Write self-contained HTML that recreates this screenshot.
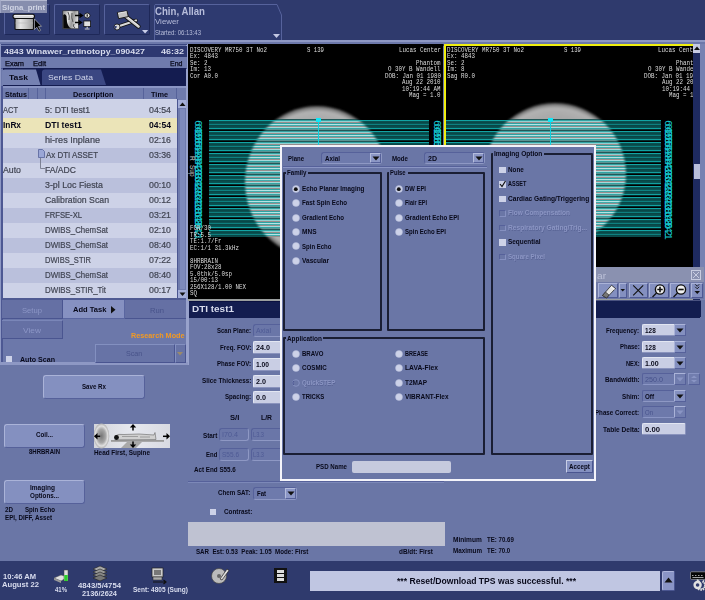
<!DOCTYPE html>
<html><head><meta charset="utf-8"><style>*{box-sizing:border-box;margin:0;padding:0}
html,body{width:705px;height:600px;overflow:hidden;background:#6a76a6;font-family:"Liberation Sans",sans-serif;position:relative}
.a{position:absolute}
.t{position:absolute;white-space:nowrap;line-height:1;transform-origin:0 0}
.b{font-weight:bold}
svg{position:absolute;overflow:visible}
</style></head><body>
<div class="a" style="left:0px;top:0px;width:705px;height:40px;background:#2f3a6d;"></div>
<div class="a" style="left:0px;top:40px;width:705px;height:1.5px;background:#8e98c4;"></div>
<div class="a" style="left:0px;top:41.5px;width:705px;height:2.5px;background:#6c78aa;"></div>
<div class="a" style="left:0px;top:44px;width:705px;height:1.5px;background:#27306a;"></div>
<div class="a" style="left:4px;top:4px;width:46px;height:31px;background:#2e3a70;border:1px solid #56629c;border-right-color:#1e2858;border-bottom-color:#1e2858;border-radius:2px;"></div>
<div class="a" style="left:54px;top:4px;width:46px;height:31px;background:#2e3a70;border:1px solid #56629c;border-right-color:#1e2858;border-bottom-color:#1e2858;border-radius:2px;"></div>
<div class="a" style="left:104px;top:4px;width:46px;height:31px;background:#2e3a70;border:1px solid #56629c;border-right-color:#1e2858;border-bottom-color:#1e2858;border-radius:2px;"></div>
<svg style="left:154px;top:3px" width="130" height="37"><path d="M0.5,37 V2.5 Q0.5,1.5 2,1.5 H123 L127.5,12 V37" fill="#2e3a70" stroke="#56629c" stroke-width="1"/></svg>
<div id="t0" class="t b" style="left:155px;top:6.21px;font-size:11px;color:#b6bcda;font-family:'Liberation Sans',sans-serif;transform:scaleX(0.8765);">Chin, Allan</div>
<div id="t1" class="t" style="left:155px;top:18.06px;font-size:8px;color:#b6bcda;font-family:'Liberation Sans',sans-serif;transform:scaleX(0.9871);">Viewer</div>
<div id="t2" class="t" style="left:155px;top:29.74px;font-size:6.5px;color:#b6bcda;font-family:'Liberation Sans',sans-serif;transform:scaleX(0.9223);">Started: 06:13:43</div>
<svg style="left:273px;top:34px" width="8" height="5"><path d="M0,0 H7 L3.5,4 Z" fill="#c3c8e4"/></svg>
<svg style="left:141.5px;top:30px" width="8" height="5"><path d="M0,0 H6.2 L3.1,3.6 Z" fill="#c8cde8"/></svg>
<svg style="left:12px;top:13px" width="32" height="20">
<defs><linearGradient id="i1" x1="0" x2="1"><stop offset="0" stop-color="#aaa"/><stop offset="0.3" stop-color="#e4e4e4"/><stop offset="0.6" stop-color="#c8c8c8"/><stop offset="1" stop-color="#999"/></linearGradient></defs>
<rect x="3" y="5" width="18.5" height="11.5" rx="1" fill="url(#i1)" stroke="#111" stroke-width="1.1"/>
<path d="M3.5,10 H21" stroke="#bbb" stroke-width="0.6"/>
<rect x="1" y="1.3" width="21.5" height="4.2" rx="2" fill="#d8d8d8" stroke="#111" stroke-width="1.1"/>
<path d="M2.5,2.6 H21" stroke="#fff" stroke-width="0.8"/>
<path d="M22.5,6 L22.5,16.5 L24.8,14.2 L27,18.2 L28.6,17.3 L26.5,13.5 L29.5,13.3 Z" fill="#000" stroke="#c8c8c8" stroke-width="0.6"/>
</svg>
<svg style="left:62px;top:10px" width="32" height="22">
<defs><linearGradient id="i2" x1="0" x2="1" y1="0" y2="0.3"><stop offset="0" stop-color="#888"/><stop offset="0.4" stop-color="#e8e8e8"/><stop offset="0.7" stop-color="#999"/><stop offset="1" stop-color="#ddd"/></linearGradient></defs>
<rect x="0.8" y="0.8" width="15.7" height="18" fill="url(#i2)" stroke="#222" stroke-width="0.6"/>
<path d="M1.2,5 Q3,3 4.5,6 L5,12 Q6,17 9,18.4 L1.2,18.4 Z" fill="#080808"/>
<path d="M6,2 Q8,6 7,10 M10,3 Q9,8 11,12 M12,14 Q10,16 13,18" stroke="#555" stroke-width="1" fill="none"/>
<path d="M13,5.5 H20 M17.5,3.5 L20.5,5.5 L17.5,7.5" stroke="#000" stroke-width="1.3" fill="none"/>
<path d="M13,12.5 H19 M16.5,10.5 L19.5,12.5 L16.5,14.5" stroke="#000" stroke-width="1.3" fill="none"/>
<ellipse cx="25.2" cy="5.5" rx="2.8" ry="2.5" fill="#ddd" stroke="#111" stroke-width="0.8"/>
<rect x="24.6" y="4.3" width="1.2" height="2.4" fill="#111"/>
<rect x="21.8" y="11" width="6.8" height="5.6" fill="#e0e0e0" stroke="#111" stroke-width="0.8"/>
<path d="M25.2,16.8 V18.3 M22.8,19 H27.6" stroke="#ccc" stroke-width="1.2"/>
</svg>
<svg style="left:111px;top:10px" width="32" height="22">
<path d="M7,16.5 L25,10.5" stroke="#111" stroke-width="3.6" stroke-linecap="round"/>
<path d="M7,16.5 L25,10.5" stroke="#d8d8d8" stroke-width="2.2" stroke-linecap="round"/>
<circle cx="6" cy="17" r="3" fill="#d8d8d8" stroke="#111" stroke-width="0.8"/>
<path d="M3,15.8 L6.2,16.6 L4.2,19.2 Z" fill="#2e3a70"/>
<path d="M13.5,5.5 L27.5,16.5" stroke="#111" stroke-width="4.4" stroke-linecap="round"/>
<path d="M13.5,5.5 L27.5,16.5" stroke="#cfcfcf" stroke-width="2.8" stroke-linecap="round"/>
<path d="M14,5 L27,15.5" stroke="#f0f0f0" stroke-width="0.8"/>
<path d="M6.3,2.6 L16,0.8 L17.3,6.6 L7.6,8.7 Z" fill="#c4c4c4" stroke="#111" stroke-width="0.9"/>
<path d="M7,3.2 L15.5,1.6" stroke="#eee" stroke-width="0.9"/>
</svg>
<div class="a" style="left:0px;top:0px;width:47px;height:13px;background:#878eae;border-top:1px solid #b4b9d0;border-left:1px solid #a0a6c4;"></div>
<div id="t3" class="t b" style="left:2px;top:4.08px;font-size:7.8px;color:#d0d4e4;font-family:'Liberation Sans',sans-serif;transform:scaleX(1.0026);">Signa_print</div>
<div class="a" style="left:0px;top:41.5px;width:188px;height:323.5px;background:#6c78aa;"></div>
<div class="a" style="left:0px;top:44px;width:1px;height:320px;background:#8e98c4;"></div>
<div class="a" style="left:1px;top:86px;width:2px;height:277px;background:#4d5893;"></div>
<div class="a" style="left:186px;top:44px;width:2.7px;height:321px;background:#98a2cc;"></div>
<div class="a" style="left:0px;top:362px;width:188px;height:3px;background:#8e98c4;"></div>
<div class="a" style="left:1px;top:44.3px;width:185.5px;height:1.2px;background:#3a4680;"></div>
<div class="a" style="left:1px;top:45.5px;width:185.5px;height:11px;background:#2d3871;"></div>
<div id="t4" class="t b" style="left:4px;top:47.58px;font-size:7.8px;color:#d8dcee;font-family:'Liberation Sans',sans-serif;transform:scaleX(1.1342);">4843 Winawer_retinotopy_090427</div>
<div id="t5" class="t b" style="left:161px;top:47.58px;font-size:7.8px;color:#d8dcee;font-family:'Liberation Sans',sans-serif;transform:scaleX(1.1527);">46:32</div>
<div class="a" style="left:1px;top:56.5px;width:185.5px;height:12px;background:#6f7bad;"></div>
<div class="a" style="left:1px;top:67.8px;width:185.5px;height:1px;background:#4a5590;"></div>
<div id="t6" class="t" style="left:5px;top:59.78px;font-size:7px;color:#08091a;font-family:'Liberation Sans',sans-serif;-webkit-text-stroke:0.25px #08091a;transform:scaleX(1.0611);">Exam</div>
<div id="t7" class="t" style="left:33px;top:59.78px;font-size:7px;color:#08091a;font-family:'Liberation Sans',sans-serif;-webkit-text-stroke:0.25px #08091a;transform:scaleX(1.0777);">Edit</div>
<div id="t8" class="t" style="left:170px;top:59.78px;font-size:7px;color:#08091a;font-family:'Liberation Sans',sans-serif;-webkit-text-stroke:0.25px #08091a;transform:scaleX(1.0025);">End</div>
<div class="a" style="left:3px;top:68px;width:183px;height:18px;background:#141c50;"></div>
<svg style="left:2px;top:69px" width="110" height="17"><path d="M0,16 V3 Q0,0.5 3,0.5 H34 L38.5,16 Z" fill="#7581b2"/><path d="M40,16 V3 Q40,0.5 43,0.5 H99 L104,16 Z" fill="#3b4782"/></svg>
<div id="t9" class="t b" style="left:9px;top:74.12px;font-size:7.5px;color:#08091a;font-family:'Liberation Sans',sans-serif;transform:scaleX(1.1483);">Task</div>
<div id="t10" class="t" style="left:48px;top:74.12px;font-size:7.5px;color:#d0d5ea;font-family:'Liberation Sans',sans-serif;transform:scaleX(1.1483);">Series Data</div>
<div class="a" style="left:3px;top:86px;width:183px;height:13px;background:#6f7bad;"></div>
<div class="a" style="left:3px;top:86px;width:183px;height:2px;background:#8a95c4;"></div>
<div class="a" style="left:28px;top:88px;width:1px;height:11px;background:#56629a;"></div>
<div class="a" style="left:36.5px;top:88px;width:1px;height:11px;background:#56629a;"></div>
<div class="a" style="left:44.5px;top:88px;width:1px;height:11px;background:#56629a;"></div>
<div class="a" style="left:143px;top:88px;width:1px;height:11px;background:#56629a;"></div>
<div class="a" style="left:176px;top:88px;width:1px;height:11px;background:#56629a;"></div>
<div id="t11" class="t b" style="left:5px;top:91.72px;font-size:6.6px;color:#08091a;font-family:'Liberation Sans',sans-serif;transform:scaleX(1.0915);">Status</div>
<div id="t12" class="t b" style="left:73px;top:91.72px;font-size:6.6px;color:#08091a;font-family:'Liberation Sans',sans-serif;transform:scaleX(1.1135);">Description</div>
<div id="t13" class="t b" style="left:151px;top:91.72px;font-size:6.6px;color:#08091a;font-family:'Liberation Sans',sans-serif;transform:scaleX(1.1125);">Time</div>
<div class="a" style="left:3px;top:99px;width:174px;height:199px;background:#cdd2e7;"></div>
<div class="a" style="left:3px;top:99px;width:174px;height:19px;background:#cdd2e7;"></div>
<div id="t14" class="t" style="left:3px;top:106.27px;font-size:8.8px;color:#404452;font-family:'Liberation Sans',sans-serif;-webkit-text-stroke:0.2px #404452;transform:scaleX(0.8518);">ACT</div>
<div id="t15" class="t" style="left:45px;top:106.27px;font-size:8.8px;color:#404452;font-family:'Liberation Sans',sans-serif;-webkit-text-stroke:0.2px #404452;transform:scaleX(0.9897);">5: DTI test1</div>
<div id="t16" class="t" style="left:149px;top:106.27px;font-size:8.8px;color:#404452;font-family:'Liberation Sans',sans-serif;-webkit-text-stroke:0.2px #404452;transform:scaleX(0.9993);">04:54</div>
<div class="a" style="left:3px;top:118px;width:174px;height:15px;background:#ebe4b8;"></div>
<div id="t17" class="t b" style="left:3px;top:121.37px;font-size:8.8px;color:#08091a;font-family:'Liberation Sans',sans-serif;transform:scaleX(0.9435);">InRx</div>
<div id="t18" class="t b" style="left:45px;top:121.37px;font-size:8.8px;color:#08091a;font-family:'Liberation Sans',sans-serif;transform:scaleX(0.9958);">DTI test1</div>
<div id="t19" class="t b" style="left:149px;top:121.37px;font-size:8.8px;color:#08091a;font-family:'Liberation Sans',sans-serif;transform:scaleX(0.9778);">04:54</div>
<div class="a" style="left:3px;top:133px;width:174px;height:15px;background:#cdd2e7;"></div>
<div id="t20" class="t" style="left:45px;top:136.37px;font-size:8.8px;color:#404452;font-family:'Liberation Sans',sans-serif;-webkit-text-stroke:0.2px #404452;transform:scaleX(1.0317);">hi-res Inplane</div>
<div id="t21" class="t" style="left:149px;top:136.37px;font-size:8.8px;color:#404452;font-family:'Liberation Sans',sans-serif;-webkit-text-stroke:0.2px #404452;transform:scaleX(0.9993);">02:16</div>
<div class="a" style="left:3px;top:148px;width:174px;height:15px;background:#bac0dc;"></div>
<div id="t22" class="t" style="left:46px;top:151.37px;font-size:8.8px;color:#404452;font-family:'Liberation Sans',sans-serif;-webkit-text-stroke:0.2px #404452;transform:scaleX(0.9014);">Ax DTI ASSET</div>
<div id="t23" class="t" style="left:149px;top:151.37px;font-size:8.8px;color:#404452;font-family:'Liberation Sans',sans-serif;-webkit-text-stroke:0.2px #404452;transform:scaleX(0.9993);">03:36</div>
<div class="a" style="left:3px;top:163px;width:174px;height:15px;background:#cdd2e7;"></div>
<div id="t24" class="t" style="left:3px;top:166.37px;font-size:8.8px;color:#404452;font-family:'Liberation Sans',sans-serif;-webkit-text-stroke:0.2px #404452;transform:scaleX(0.9940);">Auto</div>
<div id="t25" class="t" style="left:45px;top:166.37px;font-size:8.8px;color:#404452;font-family:'Liberation Sans',sans-serif;-webkit-text-stroke:0.2px #404452;transform:scaleX(0.9754);">FA/ADC</div>
<div class="a" style="left:3px;top:178px;width:174px;height:15px;background:#bac0dc;"></div>
<div id="t26" class="t" style="left:45px;top:181.37px;font-size:8.8px;color:#404452;font-family:'Liberation Sans',sans-serif;-webkit-text-stroke:0.2px #404452;transform:scaleX(1.0051);">3-pl Loc Fiesta</div>
<div id="t27" class="t" style="left:149px;top:181.37px;font-size:8.8px;color:#404452;font-family:'Liberation Sans',sans-serif;-webkit-text-stroke:0.2px #404452;transform:scaleX(0.9993);">00:10</div>
<div class="a" style="left:3px;top:193px;width:174px;height:15px;background:#cdd2e7;"></div>
<div id="t28" class="t" style="left:45px;top:196.37px;font-size:8.8px;color:#404452;font-family:'Liberation Sans',sans-serif;-webkit-text-stroke:0.2px #404452;transform:scaleX(0.9915);">Calibration Scan</div>
<div id="t29" class="t" style="left:149px;top:196.37px;font-size:8.8px;color:#404452;font-family:'Liberation Sans',sans-serif;-webkit-text-stroke:0.2px #404452;transform:scaleX(0.9993);">00:12</div>
<div class="a" style="left:3px;top:208px;width:174px;height:15px;background:#bac0dc;"></div>
<div id="t30" class="t" style="left:45px;top:211.37px;font-size:8.8px;color:#404452;font-family:'Liberation Sans',sans-serif;-webkit-text-stroke:0.2px #404452;transform:scaleX(0.8699);">FRFSE-XL</div>
<div id="t31" class="t" style="left:149px;top:211.37px;font-size:8.8px;color:#404452;font-family:'Liberation Sans',sans-serif;-webkit-text-stroke:0.2px #404452;transform:scaleX(0.9993);">03:21</div>
<div class="a" style="left:3px;top:223px;width:174px;height:15px;background:#cdd2e7;"></div>
<div id="t32" class="t" style="left:45px;top:226.37px;font-size:8.8px;color:#404452;font-family:'Liberation Sans',sans-serif;-webkit-text-stroke:0.2px #404452;transform:scaleX(0.8948);">DWIBS_ChemSat</div>
<div id="t33" class="t" style="left:149px;top:226.37px;font-size:8.8px;color:#404452;font-family:'Liberation Sans',sans-serif;-webkit-text-stroke:0.2px #404452;transform:scaleX(0.9993);">02:10</div>
<div class="a" style="left:3px;top:238px;width:174px;height:15px;background:#bac0dc;"></div>
<div id="t34" class="t" style="left:45px;top:241.37px;font-size:8.8px;color:#404452;font-family:'Liberation Sans',sans-serif;-webkit-text-stroke:0.2px #404452;transform:scaleX(0.8948);">DWIBS_ChemSat</div>
<div id="t35" class="t" style="left:149px;top:241.37px;font-size:8.8px;color:#404452;font-family:'Liberation Sans',sans-serif;-webkit-text-stroke:0.2px #404452;transform:scaleX(0.9993);">08:40</div>
<div class="a" style="left:3px;top:253px;width:174px;height:15px;background:#cdd2e7;"></div>
<div id="t36" class="t" style="left:45px;top:256.37px;font-size:8.8px;color:#404452;font-family:'Liberation Sans',sans-serif;-webkit-text-stroke:0.2px #404452;transform:scaleX(0.8556);">DWIBS_STIR</div>
<div id="t37" class="t" style="left:149px;top:256.37px;font-size:8.8px;color:#404452;font-family:'Liberation Sans',sans-serif;-webkit-text-stroke:0.2px #404452;transform:scaleX(0.9993);">07:22</div>
<div class="a" style="left:3px;top:268px;width:174px;height:15px;background:#bac0dc;"></div>
<div id="t38" class="t" style="left:45px;top:271.37px;font-size:8.8px;color:#404452;font-family:'Liberation Sans',sans-serif;-webkit-text-stroke:0.2px #404452;transform:scaleX(0.8948);">DWIBS_ChemSat</div>
<div id="t39" class="t" style="left:149px;top:271.37px;font-size:8.8px;color:#404452;font-family:'Liberation Sans',sans-serif;-webkit-text-stroke:0.2px #404452;transform:scaleX(0.9993);">08:40</div>
<div class="a" style="left:3px;top:283px;width:174px;height:15px;background:#cdd2e7;"></div>
<div id="t40" class="t" style="left:45px;top:286.37px;font-size:8.8px;color:#404452;font-family:'Liberation Sans',sans-serif;-webkit-text-stroke:0.2px #404452;transform:scaleX(0.8956);">DWIBS_STIR_Tit</div>
<div id="t41" class="t" style="left:149px;top:286.37px;font-size:8.8px;color:#404452;font-family:'Liberation Sans',sans-serif;-webkit-text-stroke:0.2px #404452;transform:scaleX(0.9993);">00:17</div>
<svg style="left:37px;top:148px" width="10" height="26"><path d="M1.5,1.5 H5.5 L7.5,3.5 V9.5 H1.5 Z" fill="#9aa6d6" stroke="#56629a" stroke-width="0.8"/><path d="M3.5,10 V20.5 H8" stroke="#6a6e80" stroke-width="0.8" fill="none"/></svg>
<div class="a" style="left:177px;top:99px;width:9px;height:199px;background:#6f7bad;"></div>
<div class="a" style="left:177px;top:99px;width:1px;height:199px;background:#4a5590;"></div>
<div class="a" style="left:178px;top:100px;width:8px;height:8px;background:#a4aed8;"></div>
<svg style="left:179px;top:102px" width="7" height="5"><path d="M0.5,4 H6.5 L3.5,0.5 Z" fill="#111"/></svg>
<div class="a" style="left:178px;top:290px;width:8px;height:8px;background:#a4aed8;"></div>
<svg style="left:179px;top:292px" width="7" height="5"><path d="M0.5,0.5 H6.5 L3.5,4 Z" fill="#111"/></svg>
<div class="a" style="left:180px;top:109px;width:5px;height:180px;background:#7e8abb;"></div>
<div class="a" style="left:3px;top:298px;width:183px;height:2px;background:#4f5a92;"></div>
<div class="a" style="left:2px;top:300px;width:61px;height:19px;background:#6570a4;border-bottom:1px solid #4a5590;border-right:1px solid #4a5590;"></div>
<div class="a" style="left:63px;top:300px;width:62px;height:19px;background:#8691c1;border-bottom:1px solid #5a66a0;border-right:1px solid #5a66a0;"></div>
<div class="a" style="left:125px;top:300px;width:61px;height:19px;background:#6570a4;border-bottom:1px solid #4a5590;"></div>
<div id="t42" class="t" style="left:22px;top:306.86px;font-size:8px;color:#8c96c6;font-family:'Liberation Sans',sans-serif;transform:scaleX(0.9567);">Setup</div>
<div id="t43" class="t b" style="left:72.5px;top:306.06px;font-size:8px;color:#08091a;font-family:'Liberation Sans',sans-serif;transform:scaleX(0.9457);">Add Task</div>
<svg style="left:111px;top:306px" width="5" height="8"><path d="M0,0 L4.5,3.8 L0,7.6 Z" fill="#111"/></svg>
<div id="t44" class="t" style="left:149.5px;top:306.86px;font-size:8px;color:#48538a;font-family:'Liberation Sans',sans-serif;transform:scaleX(0.9532);">Run</div>
<div class="a" style="left:2px;top:320px;width:61px;height:19px;background:#6570a4;border-bottom:1px solid #4a5590;border-right:1px solid #4a5590;border-top:1px solid #7a86b8;"></div>
<div id="t45" class="t" style="left:23px;top:326.66px;font-size:8px;color:#8c96c6;font-family:'Liberation Sans',sans-serif;transform:scaleX(1.0463);">View</div>
<div id="t46" class="t b" style="left:131px;top:331.92px;font-size:7.5px;color:#f29a22;font-family:'Liberation Sans',sans-serif;transform:scaleX(0.9651);">Research Mode</div>
<div class="a" style="left:95px;top:344px;width:80px;height:19px;background:#6773a6;border:1px solid #8390c0;border-right-color:#4a5590;border-bottom-color:#4a5590;"></div>
<div class="a" style="left:175px;top:344px;width:11px;height:19px;background:#6773a6;border:1px solid #8390c0;border-right-color:#4a5590;border-bottom-color:#4a5590;"></div>
<svg style="left:177px;top:352px" width="7" height="4"><path d="M0,0 H6 L3,3.5 Z" fill="#9a8a6a"/></svg>
<div id="t47" class="t" style="left:126.4px;top:350.06px;font-size:8px;color:#48538a;font-family:'Liberation Sans',sans-serif;transform:scaleX(0.8939);">Scan</div>
<div class="a" style="left:6px;top:356px;width:6px;height:6px;background:#cdd2e8;"></div>
<div id="t48" class="t b" style="left:20px;top:355.88px;font-size:7px;color:#08091a;font-family:'Liberation Sans',sans-serif;transform:scaleX(1.0108);">Auto Scan</div>
<div class="a" style="left:188px;top:44px;width:255px;height:255px;background:#000;overflow:hidden"><svg style="left:0;top:0" width="255" height="255"><defs><radialGradient id="g188" cx="0.5" cy="0.5" r="0.5"><stop offset="0" stop-color="#a2a2a2"/><stop offset="0.8" stop-color="#a8a8a8"/><stop offset="0.93" stop-color="#b2b2b2"/><stop offset="1" stop-color="#5a5a5a"/></radialGradient><pattern id="po188" patternUnits="userSpaceOnUse" x="0" y="75" width="4" height="11"><rect x="0" y="0" width="4" height="1" fill="#000"/><rect x="0" y="1" width="4" height="1" fill="#12a4a4"/><rect x="0" y="2" width="4" height="1" fill="#0a5050"/><rect x="0" y="3" width="4" height="1" fill="#084848"/><rect x="0" y="4" width="4" height="1" fill="#0a5252"/><rect x="0" y="5" width="4" height="1" fill="#0e8080"/><rect x="0" y="6" width="4" height="1" fill="#084646"/><rect x="0" y="7" width="4" height="1" fill="#0a4c4c"/><rect x="0" y="8" width="4" height="1" fill="#0a5252"/><rect x="0" y="9" width="4" height="1" fill="#12a2a2"/><rect x="0" y="10" width="4" height="1" fill="#042a2a"/></pattern><pattern id="pi188" patternUnits="userSpaceOnUse" x="0" y="75" width="4" height="11"><rect x="0" y="0" width="4" height="1" fill="#245858"/><rect x="0" y="1" width="4" height="1" fill="#32a4a4"/><rect x="0" y="2" width="4" height="1" fill="#94d0d0"/><rect x="0" y="3" width="4" height="1" fill="#988c8c"/><rect x="0" y="4" width="4" height="1" fill="#2ea2a2"/><rect x="0" y="5" width="4" height="1" fill="#b4e4e4"/><rect x="0" y="6" width="4" height="1" fill="#40acac"/><rect x="0" y="7" width="4" height="1" fill="#988c8c"/><rect x="0" y="8" width="4" height="1" fill="#a4dada"/><rect x="0" y="9" width="4" height="1" fill="#32a4a4"/><rect x="0" y="10" width="4" height="1" fill="#5e9494"/></pattern><filter id="bl188" x="-10%" y="-10%" width="120%" height="120%"><feGaussianBlur stdDeviation="1.3"/></filter><mask id="c188" maskUnits="userSpaceOnUse" x="0" y="0" width="255" height="255"><ellipse cx="129" cy="138" rx="72" ry="76" fill="#fff" filter="url(#bl188)"/></mask></defs><ellipse cx="129" cy="138" rx="72" ry="76" fill="url(#g188)" filter="url(#bl188)"/><rect x="21" y="75" width="220" height="118" fill="url(#po188)"/><rect x="21" y="75" width="220" height="118" fill="url(#pi188)" mask="url(#c188)"/><rect x="130" y="75" width="1" height="180" fill="#10d0e0"/><rect x="128" y="74" width="5" height="4" fill="#10e8f8"/><text x="0" y="0" font-family="Liberation Mono" font-size="10.5" fill="#14c4cc" transform="translate(7.2 76.00) rotate(90)">64</text><text x="0" y="0" font-family="Liberation Mono" font-size="10.5" fill="#14c4cc" transform="translate(7.2 79.55) rotate(90)">62</text><text x="0" y="0" font-family="Liberation Mono" font-size="10.5" fill="#14c4cc" transform="translate(7.2 83.10) rotate(90)">60</text><text x="0" y="0" font-family="Liberation Mono" font-size="10.5" fill="#14c4cc" transform="translate(7.2 86.65) rotate(90)">58</text><text x="0" y="0" font-family="Liberation Mono" font-size="10.5" fill="#14c4cc" transform="translate(7.2 90.20) rotate(90)">56</text><text x="0" y="0" font-family="Liberation Mono" font-size="10.5" fill="#14c4cc" transform="translate(7.2 93.75) rotate(90)">54</text><text x="0" y="0" font-family="Liberation Mono" font-size="10.5" fill="#14c4cc" transform="translate(7.2 97.30) rotate(90)">52</text><text x="0" y="0" font-family="Liberation Mono" font-size="10.5" fill="#14c4cc" transform="translate(7.2 100.85) rotate(90)">50</text><text x="0" y="0" font-family="Liberation Mono" font-size="10.5" fill="#14c4cc" transform="translate(7.2 104.40) rotate(90)">48</text><text x="0" y="0" font-family="Liberation Mono" font-size="10.5" fill="#14c4cc" transform="translate(7.2 107.95) rotate(90)">46</text><text x="0" y="0" font-family="Liberation Mono" font-size="10.5" fill="#14c4cc" transform="translate(7.2 111.50) rotate(90)">44</text><text x="0" y="0" font-family="Liberation Mono" font-size="10.5" fill="#14c4cc" transform="translate(7.2 115.05) rotate(90)">42</text><text x="0" y="0" font-family="Liberation Mono" font-size="10.5" fill="#14c4cc" transform="translate(7.2 118.60) rotate(90)">40</text><text x="0" y="0" font-family="Liberation Mono" font-size="10.5" fill="#14c4cc" transform="translate(7.2 122.15) rotate(90)">38</text><text x="0" y="0" font-family="Liberation Mono" font-size="10.5" fill="#14c4cc" transform="translate(7.2 125.70) rotate(90)">36</text><text x="0" y="0" font-family="Liberation Mono" font-size="10.5" fill="#14c4cc" transform="translate(7.2 129.25) rotate(90)">34</text><text x="0" y="0" font-family="Liberation Mono" font-size="10.5" fill="#14c4cc" transform="translate(7.2 132.80) rotate(90)">32</text><text x="0" y="0" font-family="Liberation Mono" font-size="10.5" fill="#14c4cc" transform="translate(7.2 136.35) rotate(90)">30</text><text x="0" y="0" font-family="Liberation Mono" font-size="10.5" fill="#14c4cc" transform="translate(7.2 139.90) rotate(90)">28</text><text x="0" y="0" font-family="Liberation Mono" font-size="10.5" fill="#14c4cc" transform="translate(7.2 143.45) rotate(90)">26</text><text x="0" y="0" font-family="Liberation Mono" font-size="10.5" fill="#14c4cc" transform="translate(7.2 147.00) rotate(90)">24</text><text x="0" y="0" font-family="Liberation Mono" font-size="10.5" fill="#14c4cc" transform="translate(7.2 150.55) rotate(90)">22</text><text x="0" y="0" font-family="Liberation Mono" font-size="10.5" fill="#14c4cc" transform="translate(7.2 154.10) rotate(90)">20</text><text x="0" y="0" font-family="Liberation Mono" font-size="10.5" fill="#14c4cc" transform="translate(7.2 157.65) rotate(90)">18</text><text x="0" y="0" font-family="Liberation Mono" font-size="10.5" fill="#14c4cc" transform="translate(7.2 161.20) rotate(90)">16</text><text x="0" y="0" font-family="Liberation Mono" font-size="10.5" fill="#14c4cc" transform="translate(7.2 164.75) rotate(90)">14</text><text x="0" y="0" font-family="Liberation Mono" font-size="10.5" fill="#14c4cc" transform="translate(7.2 168.30) rotate(90)">12</text><text x="0" y="0" font-family="Liberation Mono" font-size="10.5" fill="#14c4cc" transform="translate(7.2 171.85) rotate(90)">10</text><text x="0" y="0" font-family="Liberation Mono" font-size="10.5" fill="#14c4cc" transform="translate(7.2 175.40) rotate(90)">8</text><text x="0" y="0" font-family="Liberation Mono" font-size="10.5" fill="#14c4cc" transform="translate(7.2 178.95) rotate(90)">6</text><text x="0" y="0" font-family="Liberation Mono" font-size="10.5" fill="#14c4cc" transform="translate(7.2 182.50) rotate(90)">4</text><text x="0" y="0" font-family="Liberation Mono" font-size="10.5" fill="#14c4cc" transform="translate(7.2 186.05) rotate(90)">2</text><text x="0" y="0" font-family="Liberation Mono" font-size="10.5" fill="#14c4cc" transform="translate(7.2 189.60) rotate(90)">1</text><text x="0" y="0" font-family="Liberation Mono" font-size="10.5" fill="#14c4cc" transform="translate(246.2 76.00) rotate(90)">64</text><text x="0" y="0" font-family="Liberation Mono" font-size="10.5" fill="#14c4cc" transform="translate(246.2 79.55) rotate(90)">62</text><text x="0" y="0" font-family="Liberation Mono" font-size="10.5" fill="#14c4cc" transform="translate(246.2 83.10) rotate(90)">60</text><text x="0" y="0" font-family="Liberation Mono" font-size="10.5" fill="#14c4cc" transform="translate(246.2 86.65) rotate(90)">58</text><text x="0" y="0" font-family="Liberation Mono" font-size="10.5" fill="#14c4cc" transform="translate(246.2 90.20) rotate(90)">56</text><text x="0" y="0" font-family="Liberation Mono" font-size="10.5" fill="#14c4cc" transform="translate(246.2 93.75) rotate(90)">54</text><text x="0" y="0" font-family="Liberation Mono" font-size="10.5" fill="#14c4cc" transform="translate(246.2 97.30) rotate(90)">52</text><text x="0" y="0" font-family="Liberation Mono" font-size="10.5" fill="#14c4cc" transform="translate(246.2 100.85) rotate(90)">50</text><text x="0" y="0" font-family="Liberation Mono" font-size="10.5" fill="#14c4cc" transform="translate(246.2 104.40) rotate(90)">48</text><text x="0" y="0" font-family="Liberation Mono" font-size="10.5" fill="#14c4cc" transform="translate(246.2 107.95) rotate(90)">46</text><text x="0" y="0" font-family="Liberation Mono" font-size="10.5" fill="#14c4cc" transform="translate(246.2 111.50) rotate(90)">44</text><text x="0" y="0" font-family="Liberation Mono" font-size="10.5" fill="#14c4cc" transform="translate(246.2 115.05) rotate(90)">42</text><text x="0" y="0" font-family="Liberation Mono" font-size="10.5" fill="#14c4cc" transform="translate(246.2 118.60) rotate(90)">40</text><text x="0" y="0" font-family="Liberation Mono" font-size="10.5" fill="#14c4cc" transform="translate(246.2 122.15) rotate(90)">38</text><text x="0" y="0" font-family="Liberation Mono" font-size="10.5" fill="#14c4cc" transform="translate(246.2 125.70) rotate(90)">36</text><text x="0" y="0" font-family="Liberation Mono" font-size="10.5" fill="#14c4cc" transform="translate(246.2 129.25) rotate(90)">34</text><text x="0" y="0" font-family="Liberation Mono" font-size="10.5" fill="#14c4cc" transform="translate(246.2 132.80) rotate(90)">32</text><text x="0" y="0" font-family="Liberation Mono" font-size="10.5" fill="#14c4cc" transform="translate(246.2 136.35) rotate(90)">30</text><text x="0" y="0" font-family="Liberation Mono" font-size="10.5" fill="#14c4cc" transform="translate(246.2 139.90) rotate(90)">28</text><text x="0" y="0" font-family="Liberation Mono" font-size="10.5" fill="#14c4cc" transform="translate(246.2 143.45) rotate(90)">26</text><text x="0" y="0" font-family="Liberation Mono" font-size="10.5" fill="#14c4cc" transform="translate(246.2 147.00) rotate(90)">24</text><text x="0" y="0" font-family="Liberation Mono" font-size="10.5" fill="#14c4cc" transform="translate(246.2 150.55) rotate(90)">22</text><text x="0" y="0" font-family="Liberation Mono" font-size="10.5" fill="#14c4cc" transform="translate(246.2 154.10) rotate(90)">20</text><text x="0" y="0" font-family="Liberation Mono" font-size="10.5" fill="#14c4cc" transform="translate(246.2 157.65) rotate(90)">18</text><text x="0" y="0" font-family="Liberation Mono" font-size="10.5" fill="#14c4cc" transform="translate(246.2 161.20) rotate(90)">16</text><text x="0" y="0" font-family="Liberation Mono" font-size="10.5" fill="#14c4cc" transform="translate(246.2 164.75) rotate(90)">14</text><text x="0" y="0" font-family="Liberation Mono" font-size="10.5" fill="#14c4cc" transform="translate(246.2 168.30) rotate(90)">12</text><text x="0" y="0" font-family="Liberation Mono" font-size="10.5" fill="#14c4cc" transform="translate(246.2 171.85) rotate(90)">10</text><text x="0" y="0" font-family="Liberation Mono" font-size="10.5" fill="#14c4cc" transform="translate(246.2 175.40) rotate(90)">8</text><text x="0" y="0" font-family="Liberation Mono" font-size="10.5" fill="#14c4cc" transform="translate(246.2 178.95) rotate(90)">6</text><text x="0" y="0" font-family="Liberation Mono" font-size="10.5" fill="#14c4cc" transform="translate(246.2 182.50) rotate(90)">4</text><text x="0" y="0" font-family="Liberation Mono" font-size="10.5" fill="#14c4cc" transform="translate(246.2 186.05) rotate(90)">2</text><text x="0" y="0" font-family="Liberation Mono" font-size="10.5" fill="#14c4cc" transform="translate(246.2 189.60) rotate(90)">1</text></svg></div>
<div class="a" style="left:444px;top:44px;width:249px;height:255px;background:#000;overflow:hidden"><svg style="left:0;top:0" width="249" height="255"><defs><radialGradient id="g444" cx="0.5" cy="0.5" r="0.5"><stop offset="0" stop-color="#a2a2a2"/><stop offset="0.8" stop-color="#a8a8a8"/><stop offset="0.93" stop-color="#b2b2b2"/><stop offset="1" stop-color="#5a5a5a"/></radialGradient><pattern id="po444" patternUnits="userSpaceOnUse" x="0" y="75" width="4" height="11"><rect x="0" y="0" width="4" height="1" fill="#000"/><rect x="0" y="1" width="4" height="1" fill="#12a4a4"/><rect x="0" y="2" width="4" height="1" fill="#0a5050"/><rect x="0" y="3" width="4" height="1" fill="#084848"/><rect x="0" y="4" width="4" height="1" fill="#0a5252"/><rect x="0" y="5" width="4" height="1" fill="#0e8080"/><rect x="0" y="6" width="4" height="1" fill="#084646"/><rect x="0" y="7" width="4" height="1" fill="#0a4c4c"/><rect x="0" y="8" width="4" height="1" fill="#0a5252"/><rect x="0" y="9" width="4" height="1" fill="#12a2a2"/><rect x="0" y="10" width="4" height="1" fill="#042a2a"/></pattern><pattern id="pi444" patternUnits="userSpaceOnUse" x="0" y="75" width="4" height="11"><rect x="0" y="0" width="4" height="1" fill="#245858"/><rect x="0" y="1" width="4" height="1" fill="#32a4a4"/><rect x="0" y="2" width="4" height="1" fill="#94d0d0"/><rect x="0" y="3" width="4" height="1" fill="#988c8c"/><rect x="0" y="4" width="4" height="1" fill="#2ea2a2"/><rect x="0" y="5" width="4" height="1" fill="#b4e4e4"/><rect x="0" y="6" width="4" height="1" fill="#40acac"/><rect x="0" y="7" width="4" height="1" fill="#988c8c"/><rect x="0" y="8" width="4" height="1" fill="#a4dada"/><rect x="0" y="9" width="4" height="1" fill="#32a4a4"/><rect x="0" y="10" width="4" height="1" fill="#5e9494"/></pattern><filter id="bl444" x="-10%" y="-10%" width="120%" height="120%"><feGaussianBlur stdDeviation="1.3"/></filter><mask id="c444" maskUnits="userSpaceOnUse" x="0" y="0" width="249" height="255"><ellipse cx="111" cy="130" rx="71" ry="71" fill="#fff" filter="url(#bl444)"/></mask></defs><ellipse cx="111" cy="130" rx="71" ry="71" fill="url(#g444)" filter="url(#bl444)"/><rect x="1.6000000000000227" y="75" width="215.39999999999998" height="118" fill="url(#po444)"/><rect x="1.6000000000000227" y="75" width="215.39999999999998" height="118" fill="url(#pi444)" mask="url(#c444)"/><rect x="106" y="75" width="1" height="180" fill="#10d0e0"/><rect x="104" y="74" width="5" height="4" fill="#10e8f8"/><text x="0" y="0" font-family="Liberation Mono" font-size="10.5" fill="#14c4cc" transform="translate(221.2 76.00) rotate(90)">64</text><text x="0" y="0" font-family="Liberation Mono" font-size="10.5" fill="#14c4cc" transform="translate(221.2 79.55) rotate(90)">62</text><text x="0" y="0" font-family="Liberation Mono" font-size="10.5" fill="#14c4cc" transform="translate(221.2 83.10) rotate(90)">60</text><text x="0" y="0" font-family="Liberation Mono" font-size="10.5" fill="#14c4cc" transform="translate(221.2 86.65) rotate(90)">58</text><text x="0" y="0" font-family="Liberation Mono" font-size="10.5" fill="#14c4cc" transform="translate(221.2 90.20) rotate(90)">56</text><text x="0" y="0" font-family="Liberation Mono" font-size="10.5" fill="#14c4cc" transform="translate(221.2 93.75) rotate(90)">54</text><text x="0" y="0" font-family="Liberation Mono" font-size="10.5" fill="#14c4cc" transform="translate(221.2 97.30) rotate(90)">52</text><text x="0" y="0" font-family="Liberation Mono" font-size="10.5" fill="#14c4cc" transform="translate(221.2 100.85) rotate(90)">50</text><text x="0" y="0" font-family="Liberation Mono" font-size="10.5" fill="#14c4cc" transform="translate(221.2 104.40) rotate(90)">48</text><text x="0" y="0" font-family="Liberation Mono" font-size="10.5" fill="#14c4cc" transform="translate(221.2 107.95) rotate(90)">46</text><text x="0" y="0" font-family="Liberation Mono" font-size="10.5" fill="#14c4cc" transform="translate(221.2 111.50) rotate(90)">44</text><text x="0" y="0" font-family="Liberation Mono" font-size="10.5" fill="#14c4cc" transform="translate(221.2 115.05) rotate(90)">42</text><text x="0" y="0" font-family="Liberation Mono" font-size="10.5" fill="#14c4cc" transform="translate(221.2 118.60) rotate(90)">40</text><text x="0" y="0" font-family="Liberation Mono" font-size="10.5" fill="#14c4cc" transform="translate(221.2 122.15) rotate(90)">38</text><text x="0" y="0" font-family="Liberation Mono" font-size="10.5" fill="#14c4cc" transform="translate(221.2 125.70) rotate(90)">36</text><text x="0" y="0" font-family="Liberation Mono" font-size="10.5" fill="#14c4cc" transform="translate(221.2 129.25) rotate(90)">34</text><text x="0" y="0" font-family="Liberation Mono" font-size="10.5" fill="#14c4cc" transform="translate(221.2 132.80) rotate(90)">32</text><text x="0" y="0" font-family="Liberation Mono" font-size="10.5" fill="#14c4cc" transform="translate(221.2 136.35) rotate(90)">30</text><text x="0" y="0" font-family="Liberation Mono" font-size="10.5" fill="#14c4cc" transform="translate(221.2 139.90) rotate(90)">28</text><text x="0" y="0" font-family="Liberation Mono" font-size="10.5" fill="#14c4cc" transform="translate(221.2 143.45) rotate(90)">26</text><text x="0" y="0" font-family="Liberation Mono" font-size="10.5" fill="#14c4cc" transform="translate(221.2 147.00) rotate(90)">24</text><text x="0" y="0" font-family="Liberation Mono" font-size="10.5" fill="#14c4cc" transform="translate(221.2 150.55) rotate(90)">22</text><text x="0" y="0" font-family="Liberation Mono" font-size="10.5" fill="#14c4cc" transform="translate(221.2 154.10) rotate(90)">20</text><text x="0" y="0" font-family="Liberation Mono" font-size="10.5" fill="#14c4cc" transform="translate(221.2 157.65) rotate(90)">18</text><text x="0" y="0" font-family="Liberation Mono" font-size="10.5" fill="#14c4cc" transform="translate(221.2 161.20) rotate(90)">16</text><text x="0" y="0" font-family="Liberation Mono" font-size="10.5" fill="#14c4cc" transform="translate(221.2 164.75) rotate(90)">14</text><text x="0" y="0" font-family="Liberation Mono" font-size="10.5" fill="#14c4cc" transform="translate(221.2 168.30) rotate(90)">12</text><text x="0" y="0" font-family="Liberation Mono" font-size="10.5" fill="#14c4cc" transform="translate(221.2 171.85) rotate(90)">10</text><text x="0" y="0" font-family="Liberation Mono" font-size="10.5" fill="#14c4cc" transform="translate(221.2 175.40) rotate(90)">8</text><text x="0" y="0" font-family="Liberation Mono" font-size="10.5" fill="#14c4cc" transform="translate(221.2 178.95) rotate(90)">6</text><text x="0" y="0" font-family="Liberation Mono" font-size="10.5" fill="#14c4cc" transform="translate(221.2 182.50) rotate(90)">4</text><text x="0" y="0" font-family="Liberation Mono" font-size="10.5" fill="#14c4cc" transform="translate(221.2 186.05) rotate(90)">2</text><text x="0" y="0" font-family="Liberation Mono" font-size="10.5" fill="#14c4cc" transform="translate(221.2 189.60) rotate(90)">1</text></svg></div>
<div class="a" style="left:444px;top:44px;width:249px;height:2px;background:#f0ee10;"></div>
<div class="a" style="left:444px;top:44px;width:1.6px;height:255px;background:#f0ee10;"></div>
<div id="t49" class="t" style="left:190px;top:46.79px;font-size:7px;color:#dcdcdc;font-family:'Liberation Mono',monospace;transform:scaleX(0.8331);">DISCOVERY MR750 3T No2</div>
<div id="t50" class="t" style="left:190px;top:53.34px;font-size:7px;color:#dcdcdc;font-family:'Liberation Mono',monospace;transform:scaleX(0.8331);">Ex: 4843</div>
<div id="t51" class="t" style="left:190px;top:59.89px;font-size:7px;color:#dcdcdc;font-family:'Liberation Mono',monospace;transform:scaleX(0.8327);">Se: 2</div>
<div id="t52" class="t" style="left:190px;top:66.44px;font-size:7px;color:#dcdcdc;font-family:'Liberation Mono',monospace;transform:scaleX(0.8327);">Im: 13</div>
<div id="t53" class="t" style="left:190px;top:72.99px;font-size:7px;color:#dcdcdc;font-family:'Liberation Mono',monospace;transform:scaleX(0.8331);">Cor A0.0</div>
<div id="t54" class="t" style="left:307px;top:46.79px;font-size:7px;color:#dcdcdc;font-family:'Liberation Mono',monospace;transform:scaleX(0.8089);">S 139</div>
<div id="t55" class="t" style="top:46.79px;font-size:7px;color:#dcdcdc;font-family:'Liberation Mono',monospace;transform:scaleX(0.8330);left:398.50px;">Lucas Center</div>
<div id="t56" class="t" style="top:59.79px;font-size:7px;color:#dcdcdc;font-family:'Liberation Mono',monospace;transform:scaleX(0.8332);left:416.00px;">Phantom</div>
<div id="t57" class="t" style="top:66.29px;font-size:7px;color:#dcdcdc;font-family:'Liberation Mono',monospace;transform:scaleX(0.8331);left:388.00px;">O 30Y B Wandell</div>
<div id="t58" class="t" style="top:72.79px;font-size:7px;color:#dcdcdc;font-family:'Liberation Mono',monospace;transform:scaleX(0.8331);left:384.50px;">DOB: Jan 01 1980</div>
<div id="t59" class="t" style="top:79.29px;font-size:7px;color:#dcdcdc;font-family:'Liberation Mono',monospace;transform:scaleX(0.8330);left:402.00px;">Aug 22 2010</div>
<div id="t60" class="t" style="top:85.79px;font-size:7px;color:#dcdcdc;font-family:'Liberation Mono',monospace;transform:scaleX(0.8330);left:402.00px;">10:19:44 AM</div>
<div id="t61" class="t" style="top:92.29px;font-size:7px;color:#dcdcdc;font-family:'Liberation Mono',monospace;transform:scaleX(0.8331);left:409.00px;">Mag = 1.0</div>
<div id="t62" class="t" style="left:190px;top:225.49px;font-size:7px;color:#dcdcdc;font-family:'Liberation Mono',monospace;transform:scaleX(0.8327);">FGN/30</div>
<div id="t63" class="t" style="left:190px;top:231.99px;font-size:7px;color:#dcdcdc;font-family:'Liberation Mono',monospace;transform:scaleX(0.8327);">TR:5.5</div>
<div id="t64" class="t" style="left:190px;top:238.49px;font-size:7px;color:#dcdcdc;font-family:'Liberation Mono',monospace;transform:scaleX(0.8331);">TE:1.7/Fr</div>
<div id="t65" class="t" style="left:190px;top:244.99px;font-size:7px;color:#dcdcdc;font-family:'Liberation Mono',monospace;transform:scaleX(0.8332);">EC:1/1 31.3kHz</div>
<div id="t66" class="t" style="left:190px;top:257.99px;font-size:7px;color:#dcdcdc;font-family:'Liberation Mono',monospace;transform:scaleX(0.8331);">8HRBRAIN</div>
<div id="t67" class="t" style="left:190px;top:264.49px;font-size:7px;color:#dcdcdc;font-family:'Liberation Mono',monospace;transform:scaleX(0.8331);">FOV:28x28</div>
<div id="t68" class="t" style="left:190px;top:270.99px;font-size:7px;color:#dcdcdc;font-family:'Liberation Mono',monospace;transform:scaleX(0.8330);">5.0thk/5.0sp</div>
<div id="t69" class="t" style="left:190px;top:277.49px;font-size:7px;color:#dcdcdc;font-family:'Liberation Mono',monospace;transform:scaleX(0.8331);">15/00:13</div>
<div id="t70" class="t" style="left:190px;top:283.99px;font-size:7px;color:#dcdcdc;font-family:'Liberation Mono',monospace;transform:scaleX(0.8331);">256X128/1.00 NEX</div>
<div id="t71" class="t" style="left:190px;top:290.49px;font-size:7px;color:#dcdcdc;font-family:'Liberation Mono',monospace;transform:scaleX(0.8327);">SQ</div>
<svg style="left:188px;top:150px" width="10" height="40"><text x="0" y="0" font-family="Liberation Sans" font-size="6.5" fill="#c8c8c8" transform="translate(2 6) rotate(90)">R</text><text x="0" y="0" font-family="Liberation Sans" font-size="6.5" fill="#c8c8c8" transform="translate(2 15) rotate(90)">Sup</text></svg>
<div id="t72" class="t" style="left:447px;top:46.79px;font-size:7px;color:#dcdcdc;font-family:'Liberation Mono',monospace;transform:scaleX(0.8331);">DISCOVERY MR750 3T No2</div>
<div id="t73" class="t" style="left:447px;top:53.34px;font-size:7px;color:#dcdcdc;font-family:'Liberation Mono',monospace;transform:scaleX(0.8331);">Ex: 4843</div>
<div id="t74" class="t" style="left:447px;top:59.89px;font-size:7px;color:#dcdcdc;font-family:'Liberation Mono',monospace;transform:scaleX(0.8327);">Se: 2</div>
<div id="t75" class="t" style="left:447px;top:66.44px;font-size:7px;color:#dcdcdc;font-family:'Liberation Mono',monospace;transform:scaleX(0.8327);">Im: 8</div>
<div id="t76" class="t" style="left:447px;top:72.99px;font-size:7px;color:#dcdcdc;font-family:'Liberation Mono',monospace;transform:scaleX(0.8331);">Sag R0.0</div>
<div id="t77" class="t" style="left:563.5px;top:46.79px;font-size:7px;color:#dcdcdc;font-family:'Liberation Mono',monospace;transform:scaleX(0.8089);">S 139</div>
<div class="a" style="left:444px;top:44px;width:249px;height:100px;overflow:hidden">
<div id="t78" class="t" style="top:2.79px;font-size:7px;color:#dcdcdc;font-family:'Liberation Mono',monospace;transform:scaleX(0.8330);left:214.00px;">Lucas Center</div>
<div id="t79" class="t" style="top:15.79px;font-size:7px;color:#dcdcdc;font-family:'Liberation Mono',monospace;transform:scaleX(0.8332);left:231.50px;">Phantom</div>
<div id="t80" class="t" style="top:22.29px;font-size:7px;color:#dcdcdc;font-family:'Liberation Mono',monospace;transform:scaleX(0.8331);left:203.50px;">O 30Y B Wandell</div>
<div id="t81" class="t" style="top:28.79px;font-size:7px;color:#dcdcdc;font-family:'Liberation Mono',monospace;transform:scaleX(0.8331);left:200.00px;">DOB: Jan 01 1980</div>
<div id="t82" class="t" style="top:35.29px;font-size:7px;color:#dcdcdc;font-family:'Liberation Mono',monospace;transform:scaleX(0.8330);left:217.50px;">Aug 22 2010</div>
<div id="t83" class="t" style="top:41.79px;font-size:7px;color:#dcdcdc;font-family:'Liberation Mono',monospace;transform:scaleX(0.8330);left:217.50px;">10:19:44 AM</div>
<div id="t84" class="t" style="top:48.29px;font-size:7px;color:#dcdcdc;font-family:'Liberation Mono',monospace;transform:scaleX(0.8331);left:224.50px;">Mag = 1.0</div>
</div>
<div class="a" style="left:693px;top:44px;width:7px;height:256px;background:#1e2a60;"></div>
<div class="a" style="left:693px;top:44px;width:7px;height:9px;background:#c5cae2;"></div>
<svg style="left:694px;top:46px" width="6" height="5"><path d="M0,4 H6 L3,0.5 Z" fill="#111"/></svg>
<div class="a" style="left:694px;top:164px;width:6px;height:15px;background:#b8bedb;"></div>
<div class="a" style="left:700px;top:44px;width:5px;height:256px;background:#7782b2;"></div>
<div class="a" style="left:188px;top:299px;width:505px;height:1.5px;background:#9a9e9e;"></div>
<div class="a" style="left:189px;top:300.5px;width:511px;height:1px;background:#0a1040;"></div>
<div class="a" style="left:189px;top:301.5px;width:511px;height:16px;background:#131d50;"></div>
<div id="t85" class="t b" style="left:192.4px;top:304.94px;font-size:9px;color:#d8dcee;font-family:'Liberation Sans',sans-serif;transform:scaleX(1.1048);">DTI test1</div>
<div id="t86" class="t b" style="top:327.18px;font-size:7px;color:#08091a;font-family:'Liberation Sans',sans-serif;transform:scaleX(0.8567);left:217.00px;">Scan Plane:</div>
<div class="a" style="left:253px;top:324px;width:30px;height:12.5px;background:#6a76a8;border:1px solid #56619a;border-right-color:#8e98c4;border-bottom-color:#8e98c4;border-radius:3px;"></div>
<div id="t87" class="t" style="left:256px;top:327.48px;font-size:7px;color:#4e5a94;font-family:'Liberation Sans',sans-serif;transform:scaleX(0.9877);">Axial</div>
<div id="t88" class="t b" style="top:343.58px;font-size:7px;color:#08091a;font-family:'Liberation Sans',sans-serif;transform:scaleX(0.8868);left:219.60px;">Freq. FOV:</div>
<div class="a" style="left:253px;top:341px;width:30px;height:12.5px;background:#c9cee4;border:1px solid #e2e6f2;border-right-color:#8a93bd;border-bottom-color:#8a93bd;border-radius:2px;"></div>
<div id="t89" class="t b" style="left:256px;top:344.48px;font-size:7px;color:#08091a;font-family:'Liberation Sans',sans-serif;transform:scaleX(1.0275);">24.0</div>
<div id="t90" class="t b" style="top:360.18px;font-size:7px;color:#08091a;font-family:'Liberation Sans',sans-serif;transform:scaleX(0.8739);left:217.00px;">Phase FOV:</div>
<div class="a" style="left:253px;top:358px;width:30px;height:12.5px;background:#c9cee4;border:1px solid #e2e6f2;border-right-color:#8a93bd;border-bottom-color:#8a93bd;border-radius:2px;"></div>
<div id="t91" class="t b" style="left:256px;top:361.48px;font-size:7px;color:#08091a;font-family:'Liberation Sans',sans-serif;transform:scaleX(0.9541);">1.00</div>
<div id="t92" class="t b" style="top:376.68px;font-size:7px;color:#08091a;font-family:'Liberation Sans',sans-serif;transform:scaleX(0.9005);left:201.60px;">Slice Thickness:</div>
<div class="a" style="left:253px;top:375px;width:30px;height:12.5px;background:#c9cee4;border:1px solid #e2e6f2;border-right-color:#8a93bd;border-bottom-color:#8a93bd;border-radius:2px;"></div>
<div id="t93" class="t b" style="left:256px;top:378.48px;font-size:7px;color:#08091a;font-family:'Liberation Sans',sans-serif;transform:scaleX(1.0273);">2.0</div>
<div id="t94" class="t b" style="top:393.18px;font-size:7px;color:#08091a;font-family:'Liberation Sans',sans-serif;transform:scaleX(0.8795);left:225.00px;">Spacing:</div>
<div class="a" style="left:253px;top:391px;width:30px;height:12.5px;background:#c9cee4;border:1px solid #e2e6f2;border-right-color:#8a93bd;border-bottom-color:#8a93bd;border-radius:2px;"></div>
<div id="t95" class="t b" style="left:256px;top:394.48px;font-size:7px;color:#08091a;font-family:'Liberation Sans',sans-serif;transform:scaleX(1.0273);">0.0</div>
<div id="t96" class="t b" style="left:229.6px;top:415.24px;font-size:6.5px;color:#08091a;font-family:'Liberation Sans',sans-serif;transform:scaleX(1.1819);">S/I</div>
<div id="t97" class="t b" style="left:261px;top:415.24px;font-size:6.5px;color:#08091a;font-family:'Liberation Sans',sans-serif;transform:scaleX(1.0492);">L/R</div>
<div id="t98" class="t b" style="top:431.58px;font-size:7px;color:#08091a;font-family:'Liberation Sans',sans-serif;transform:scaleX(0.9026);left:202.60px;">Start</div>
<div class="a" style="left:219px;top:428px;width:30px;height:13px;background:#6a76a8;border:1px solid #56619a;border-right-color:#8e98c4;border-bottom-color:#8e98c4;border-radius:3px;"></div>
<div id="t99" class="t" style="left:222px;top:431.48px;font-size:7px;color:#4e5a94;font-family:'Liberation Sans',sans-serif;transform:scaleX(1.0271);">I70.4</div>
<div class="a" style="left:251px;top:428px;width:32px;height:13px;background:#6a76a8;border:1px solid #56619a;border-right-color:#8e98c4;border-bottom-color:#8e98c4;border-radius:3px;"></div>
<div id="t100" class="t" style="left:253px;top:431.48px;font-size:7px;color:#4e5a94;font-family:'Liberation Sans',sans-serif;transform:scaleX(0.8073);">L3.3</div>
<div id="t101" class="t b" style="top:451.18px;font-size:7px;color:#08091a;font-family:'Liberation Sans',sans-serif;transform:scaleX(0.8538);left:205.70px;">End</div>
<div class="a" style="left:219px;top:447.5px;width:30px;height:13px;background:#6a76a8;border:1px solid #56619a;border-right-color:#8e98c4;border-bottom-color:#8e98c4;border-radius:3px;"></div>
<div id="t102" class="t" style="left:222px;top:450.98px;font-size:7px;color:#4e5a94;font-family:'Liberation Sans',sans-serif;transform:scaleX(0.9291);">S55.6</div>
<div class="a" style="left:251px;top:447.5px;width:32px;height:13px;background:#6a76a8;border:1px solid #56619a;border-right-color:#8e98c4;border-bottom-color:#8e98c4;border-radius:3px;"></div>
<div id="t103" class="t" style="left:253px;top:450.98px;font-size:7px;color:#4e5a94;font-family:'Liberation Sans',sans-serif;transform:scaleX(0.8073);">L3.3</div>
<div id="t104" class="t b" style="left:194px;top:465.68px;font-size:7px;color:#08091a;font-family:'Liberation Sans',sans-serif;transform:scaleX(0.8953);">Act End S55.6</div>
<div class="a" style="left:188px;top:481px;width:256px;height:1px;background:#56619a;"></div>
<div class="a" style="left:188px;top:482px;width:256px;height:1px;background:#7c88b8;"></div>
<div id="t105" class="t b" style="top:489.48px;font-size:7px;color:#08091a;font-family:'Liberation Sans',sans-serif;transform:scaleX(0.8864);left:217.90px;">Chem SAT:</div>
<div class="a" style="left:253px;top:487px;width:44px;height:12.5px;background:#6e7aac;border:1px solid #56619a;border-right-color:#8e98c4;border-bottom-color:#8e98c4;border-radius:3px;"></div>
<div class="a" style="left:285px;top:488px;width:11px;height:10.5px;background:#8c97c6;border:1px solid #b4bcdc;border-right-color:#56619a;border-bottom-color:#56619a;"></div>
<svg style="left:287px;top:491.25px" width="8" height="5"><path d="M0.5,0.5 H7.5 L4,4.5 Z" fill="#111"/></svg>
<div id="t106" class="t b" style="left:256.6px;top:489.58px;font-size:7px;color:#08091a;font-family:'Liberation Sans',sans-serif;transform:scaleX(0.8571);">Fat</div>
<div class="a" style="left:210px;top:509px;width:6px;height:6px;background:#cdd2e8;"></div>
<div id="t107" class="t b" style="left:223.6px;top:508.70px;font-size:6.8px;color:#08091a;font-family:'Liberation Sans',sans-serif;transform:scaleX(0.9365);">Contrast:</div>
<div class="a" style="left:188px;top:522px;width:257px;height:24px;background:#bfc2d2;"></div>
<div id="t108" class="t b" style="left:196px;top:548.74px;font-size:6.5px;color:#08091a;font-family:'Liberation Sans',sans-serif;transform:scaleX(0.9507);">SAR&nbsp; Est: 0.53&nbsp; Peak: 1.05&nbsp; Mode: First</div>
<div id="t109" class="t b" style="left:399px;top:548.74px;font-size:6.5px;color:#08091a;font-family:'Liberation Sans',sans-serif;transform:scaleX(0.9806);">dB/dt: First</div>
<div id="t110" class="t b" style="left:453px;top:536.66px;font-size:6.3px;color:#08091a;font-family:'Liberation Sans',sans-serif;transform:scaleX(1.0419);">Minimum</div>
<div id="t111" class="t b" style="left:487.4px;top:536.66px;font-size:6.3px;color:#08091a;font-family:'Liberation Sans',sans-serif;transform:scaleX(0.9690);">TE: 70.69</div>
<div id="t112" class="t b" style="left:453px;top:548.06px;font-size:6.3px;color:#08091a;font-family:'Liberation Sans',sans-serif;transform:scaleX(0.9984);">Maximum</div>
<div id="t113" class="t b" style="left:487.4px;top:548.06px;font-size:6.3px;color:#08091a;font-family:'Liberation Sans',sans-serif;transform:scaleX(0.9604);">TE: 70.0</div>
<div class="a" style="left:42.5px;top:375px;width:102px;height:24px;background:#8490c0;border:1px solid #aab3d8;border-right-color:#56619a;border-bottom-color:#56619a;border-radius:3px;"></div>
<div id="t114" class="t b" style="left:82px;top:383.96px;font-size:6.3px;color:#08091a;font-family:'Liberation Sans',sans-serif;transform:scaleX(0.9790);">Save Rx</div>
<div class="a" style="left:4px;top:424px;width:81px;height:24px;background:#8490c0;border:1px solid #aab3d8;border-right-color:#56619a;border-bottom-color:#56619a;border-radius:3px;"></div>
<div id="t115" class="t b" style="left:36px;top:432.26px;font-size:6.3px;color:#08091a;font-family:'Liberation Sans',sans-serif;transform:scaleX(0.9909);">Coil...</div>
<div id="t116" class="t b" style="left:29px;top:448.76px;font-size:6.3px;color:#08091a;font-family:'Liberation Sans',sans-serif;transform:scaleX(0.9525);">8HRBRAIN</div>
<div class="a" style="left:4px;top:479.5px;width:81px;height:24px;background:#8490c0;border:1px solid #aab3d8;border-right-color:#56619a;border-bottom-color:#56619a;border-radius:3px;"></div>
<div id="t117" class="t b" style="left:30px;top:485.26px;font-size:6.3px;color:#08091a;font-family:'Liberation Sans',sans-serif;transform:scaleX(1.0356);">Imaging</div>
<div id="t118" class="t b" style="left:30px;top:492.56px;font-size:6.3px;color:#08091a;font-family:'Liberation Sans',sans-serif;transform:scaleX(0.9984);">Options...</div>
<div id="t119" class="t b" style="left:5px;top:506.54px;font-size:6.5px;color:#08091a;font-family:'Liberation Sans',sans-serif;transform:scaleX(0.9624);">2D</div>
<div id="t120" class="t b" style="left:25px;top:506.54px;font-size:6.5px;color:#08091a;font-family:'Liberation Sans',sans-serif;transform:scaleX(0.9440);">Spin Echo</div>
<div id="t121" class="t b" style="left:5px;top:515.24px;font-size:6.5px;color:#08091a;font-family:'Liberation Sans',sans-serif;transform:scaleX(0.9613);">EPI, DIFF, Asset</div>
<div id="t122" class="t b" style="left:94px;top:450.24px;font-size:6.5px;color:#08091a;font-family:'Liberation Sans',sans-serif;transform:scaleX(0.9811);">Head First, Supine</div>
<svg style="left:94px;top:424px" width="76" height="24">
<defs><linearGradient id="pg" x1="0" x2="1"><stop offset="0" stop-color="#d4d6dc"/><stop offset="0.5" stop-color="#e6e8ee"/><stop offset="1" stop-color="#d8dae2"/></linearGradient>
<radialGradient id="bore" cx="0.5" cy="0.5" r="0.5"><stop offset="0" stop-color="#777"/><stop offset="0.55" stop-color="#a8a8a8"/><stop offset="0.8" stop-color="#e0e0e0"/><stop offset="1" stop-color="#b0b0b0"/></radialGradient></defs>
<rect x="0" y="0" width="76" height="24" fill="url(#pg)"/>
<ellipse cx="7.5" cy="12" rx="7.8" ry="12.5" fill="url(#bore)"/>
<rect x="17" y="16" width="53" height="1.8" fill="#9a9a9a"/>
<path d="M27,24 L33,18 L48,18 L42,24 Z" fill="#a8a8a8"/>
<path d="M21,12 Q24,9.5 30,10.5 L45,10 L60,11 L61,8.5 L62,15.5 L21,15.8 Z" fill="#d0d0d0" stroke="#666" stroke-width="0.6"/>
<circle cx="22.5" cy="13.5" r="2.4" fill="#111"/>
<path d="M28,12.5 H44 M46,13 H56" stroke="#888" stroke-width="0.7"/>
<path d="M0.8,12.3 H6.2" stroke="#000" stroke-width="1.5"/><path d="M0,12.3 L3.5,9 V15.6 Z" fill="#000"/>
<path d="M69,12.3 H74.5" stroke="#000" stroke-width="1.5"/><path d="M76,12.3 L72.5,9 V15.6 Z" fill="#000"/>
<path d="M39,1.5 V6.5" stroke="#000" stroke-width="1.5"/><path d="M39,0 L35.8,3.5 H42.2 Z" fill="#000"/>
<path d="M39,17.5 V22.5" stroke="#000" stroke-width="1.5"/><path d="M39,24 L35.8,20.5 H42.2 Z" fill="#000"/>
</svg>
<div class="a" style="left:596px;top:267px;width:108px;height:32px;background:#7d86ad;"></div>
<div class="a" style="left:596px;top:267px;width:108px;height:15px;background:#8a91b0;"></div>
<div id="t123" class="t" style="left:596.5px;top:271.38px;font-size:9.5px;color:#bcc1d8;font-family:'Liberation Sans',sans-serif;transform:scaleX(1.0647);">ar</div>
<div class="a" style="left:691px;top:270px;width:10px;height:10px;background:#8a91b0;border:1px solid #c8cce0;"></div>
<svg style="left:692px;top:271px" width="8" height="8"><path d="M1,1 L7,7 M7,1 L1,7" stroke="#c8cce0" stroke-width="1"/></svg>
<div class="a" style="left:596px;top:282px;width:108px;height:17px;background:#6f79a6;"></div>
<div class="a" style="left:598px;top:283px;width:19.5px;height:14.5px;background:#8490c0;border:1px solid #aab3d8;border-right-color:#4e5994;border-bottom-color:#4e5994;"></div>
<div class="a" style="left:619px;top:283px;width:8px;height:14.5px;background:#8490c0;border:1px solid #aab3d8;border-right-color:#4e5994;border-bottom-color:#4e5994;"></div>
<div class="a" style="left:628.5px;top:283px;width:19.5px;height:14.5px;background:#8490c0;border:1px solid #aab3d8;border-right-color:#4e5994;border-bottom-color:#4e5994;"></div>
<div class="a" style="left:649.3px;top:283px;width:19.5px;height:14.5px;background:#8490c0;border:1px solid #aab3d8;border-right-color:#4e5994;border-bottom-color:#4e5994;"></div>
<div class="a" style="left:670px;top:283px;width:19.5px;height:14.5px;background:#8490c0;border:1px solid #aab3d8;border-right-color:#4e5994;border-bottom-color:#4e5994;"></div>
<div class="a" style="left:691px;top:283px;width:11.5px;height:14.5px;background:#8490c0;border:1px solid #aab3d8;border-right-color:#4e5994;border-bottom-color:#4e5994;"></div>
<svg style="left:596px;top:283px" width="109" height="16">
<path d="M6.5,12.5 L15.5,2.2 L19.5,5.5 L10.5,15 Z" fill="#e4e4e4" stroke="#222" stroke-width="0.8"/>
<path d="M6.5,12.5 L9.5,9 L13,12 L10.5,15 Z" fill="#777" stroke="#222" stroke-width="0.6"/>
<path d="M15,3.5 L18.5,6.5" stroke="#fff" stroke-width="0.8"/>
<path d="M24.5,6 H29 L26.75,8.5 Z" fill="#111"/>
<path d="M37,2.5 Q42.2,6 47.4,2.5 M37,12.5 Q42.2,9 47.4,12.5" stroke="none" fill="none"/><path d="M37.2,2.3 L47.2,12.3 M47.2,2.3 L37.2,12.3" stroke="#111" stroke-width="1.1"/>
<circle cx="64" cy="6.5" r="4.6" fill="#f0f0f0" stroke="#111" stroke-width="1.4"/><path d="M61.3,6.5 H66.7 M64,3.8 V9.2" stroke="#111" stroke-width="1.6"/><path d="M60.5,10 L56.5,14" stroke="#111" stroke-width="1.3"/>
<circle cx="85" cy="6.5" r="4.6" fill="#f0f0f0" stroke="#111" stroke-width="1.4"/><path d="M82.3,6.5 H87.7" stroke="#111" stroke-width="1.6"/><path d="M81.5,10 L77.5,14" stroke="#111" stroke-width="1.3"/>
<path d="M99,1.5 L101,3.5 L99,5.5 M101.5,1.5 L103.5,3.5 L101.5,5.5" stroke="#111" stroke-width="0.9" fill="none" transform="rotate(90 101.2 3.5)"/><path d="M98.5,8 H104 L101.25,11 Z" fill="#111"/>
</svg>
<div class="a" style="left:596px;top:299.5px;width:105px;height:1.2px;background:#4a5280;"></div>
<div class="a" style="left:596px;top:300.7px;width:105px;height:16.3px;background:#131d50;"></div>
<div id="t124" class="t b" style="top:327.60px;font-size:6.8px;color:#08091a;font-family:'Liberation Sans',sans-serif;transform:scaleX(0.9006);left:606.40px;">Frequency:</div>
<div class="a" style="left:641.6px;top:324px;width:44px;height:12px;background:#c9cee4;border:1px solid #e2e6f2;border-right-color:#8a93bd;border-bottom-color:#8a93bd;border-radius:2px;"></div>
<div class="a" style="left:673.5px;top:324px;width:12px;height:12px;background:#8490c0;border:1px solid #aab3d8;border-right-color:#56619a;border-bottom-color:#56619a;"></div>
<svg style="left:675.5px;top:328px" width="8" height="5"><path d="M0.5,0.5 H7.5 L4,4.5 Z" fill="#111"/></svg>
<div id="t125" class="t b" style="left:645.3px;top:327.38px;font-size:7px;color:#08091a;font-family:'Liberation Sans',sans-serif;transform:scaleX(0.9155);">128</div>
<div id="t126" class="t b" style="top:344.40px;font-size:6.8px;color:#08091a;font-family:'Liberation Sans',sans-serif;transform:scaleX(0.8835);left:619.70px;">Phase:</div>
<div class="a" style="left:641.6px;top:340.8px;width:44px;height:12px;background:#c9cee4;border:1px solid #e2e6f2;border-right-color:#8a93bd;border-bottom-color:#8a93bd;border-radius:2px;"></div>
<div class="a" style="left:673.5px;top:340.8px;width:12px;height:12px;background:#8490c0;border:1px solid #aab3d8;border-right-color:#56619a;border-bottom-color:#56619a;"></div>
<svg style="left:675.5px;top:344.8px" width="8" height="5"><path d="M0.5,0.5 H7.5 L4,4.5 Z" fill="#111"/></svg>
<div id="t127" class="t b" style="left:645.3px;top:344.18px;font-size:7px;color:#08091a;font-family:'Liberation Sans',sans-serif;transform:scaleX(0.9155);">128</div>
<div id="t128" class="t b" style="top:360.60px;font-size:6.8px;color:#08091a;font-family:'Liberation Sans',sans-serif;transform:scaleX(0.8369);left:625.80px;">NEX:</div>
<div class="a" style="left:641.6px;top:357px;width:44px;height:12px;background:#c9cee4;border:1px solid #e2e6f2;border-right-color:#8a93bd;border-bottom-color:#8a93bd;border-radius:2px;"></div>
<div class="a" style="left:673.5px;top:357px;width:12px;height:12px;background:#8490c0;border:1px solid #aab3d8;border-right-color:#56619a;border-bottom-color:#56619a;"></div>
<svg style="left:675.5px;top:361px" width="8" height="5"><path d="M0.5,0.5 H7.5 L4,4.5 Z" fill="#111"/></svg>
<div id="t129" class="t b" style="left:645.3px;top:360.38px;font-size:7px;color:#08091a;font-family:'Liberation Sans',sans-serif;transform:scaleX(1.0055);">1.00</div>
<div id="t130" class="t b" style="top:376.60px;font-size:6.8px;color:#08091a;font-family:'Liberation Sans',sans-serif;transform:scaleX(0.9378);left:604.70px;">Bandwidth:</div>
<div class="a" style="left:641.6px;top:373px;width:44px;height:12px;background:#6d79ab;border:1px solid #56619a;border-right-color:#8a95c4;border-bottom-color:#8a95c4;border-radius:2px;"></div>
<div class="a" style="left:673.5px;top:373px;width:12px;height:12px;background:#717dae;border:1px solid #aab3d8;border-right-color:#56619a;border-bottom-color:#56619a;"></div>
<svg style="left:675.5px;top:377px" width="8" height="5"><path d="M0.5,0.5 H7.5 L4,4.5 Z" fill="#8a95c4"/></svg>
<div id="t131" class="t" style="left:645.3px;top:376.38px;font-size:7px;color:#47538c;font-family:'Liberation Sans',sans-serif;transform:scaleX(1.0267);">250.0</div>
<div class="a" style="left:688px;top:373px;width:12px;height:12px;background:#717dae;border:1px solid #8a95c4;border-right-color:#56619a;border-bottom-color:#56619a;"></div>
<svg style="left:689px;top:374px" width="10" height="10"><path d="M2,4 H8 L5,1.5 Z M2,6 H8 L5,8.5 Z" fill="#8a95c4"/></svg>
<div id="t132" class="t b" style="top:393.60px;font-size:6.8px;color:#08091a;font-family:'Liberation Sans',sans-serif;transform:scaleX(0.9211);left:622.00px;">Shim:</div>
<div class="a" style="left:641.6px;top:390px;width:44px;height:12px;background:#6e7aac;border:1px solid #56619a;border-right-color:#8e98c4;border-bottom-color:#8e98c4;border-radius:2px;"></div>
<div class="a" style="left:673.5px;top:390px;width:12px;height:12px;background:#8490c0;border:1px solid #aab3d8;border-right-color:#56619a;border-bottom-color:#56619a;"></div>
<svg style="left:675.5px;top:394px" width="8" height="5"><path d="M0.5,0.5 H7.5 L4,4.5 Z" fill="#111"/></svg>
<div id="t133" class="t b" style="left:645.3px;top:393.38px;font-size:7px;color:#08091a;font-family:'Liberation Sans',sans-serif;transform:scaleX(0.8903);">Off</div>
<div id="t134" class="t b" style="top:409.60px;font-size:6.8px;color:#08091a;font-family:'Liberation Sans',sans-serif;transform:scaleX(0.9099);left:595.40px;">Phase Correct:</div>
<div class="a" style="left:641.6px;top:406px;width:44px;height:12px;background:#6d79ab;border:1px solid #56619a;border-right-color:#8a95c4;border-bottom-color:#8a95c4;border-radius:2px;"></div>
<div class="a" style="left:673.5px;top:406px;width:12px;height:12px;background:#717dae;border:1px solid #aab3d8;border-right-color:#56619a;border-bottom-color:#56619a;"></div>
<svg style="left:675.5px;top:410px" width="8" height="5"><path d="M0.5,0.5 H7.5 L4,4.5 Z" fill="#8a95c4"/></svg>
<div id="t135" class="t" style="left:645.3px;top:409.38px;font-size:7px;color:#47538c;font-family:'Liberation Sans',sans-serif;transform:scaleX(0.8562);">On</div>
<div id="t136" class="t b" style="top:426.60px;font-size:6.8px;color:#08091a;font-family:'Liberation Sans',sans-serif;transform:scaleX(0.9676);left:602.60px;">Table Delta:</div>
<div class="a" style="left:641.6px;top:423px;width:44px;height:12px;background:#c9cee4;border:1px solid #e2e6f2;border-right-color:#8a93bd;border-bottom-color:#8a93bd;border-radius:2px;"></div>
<div id="t137" class="t b" style="left:645.3px;top:426.38px;font-size:7px;color:#08091a;font-family:'Liberation Sans',sans-serif;transform:scaleX(1.1009);">0.00</div>
<div class="a" style="left:280px;top:145px;width:316px;height:335.8px;background:#6a76a6;border:2px solid #f4f4fa;"></div>
<div id="t138" class="t b" style="left:288.4px;top:154.58px;font-size:7px;color:#08091a;font-family:'Liberation Sans',sans-serif;transform:scaleX(0.8562);">Plane</div>
<div class="a" style="left:321px;top:152px;width:61px;height:11.5px;background:#6e7aac;border:1px solid #56619a;border-right-color:#8e98c4;border-bottom-color:#8e98c4;border-radius:3px;"></div>
<div class="a" style="left:370px;top:153px;width:11px;height:9.5px;background:#8c97c6;border:1px solid #b4bcdc;border-right-color:#56619a;border-bottom-color:#56619a;"></div>
<svg style="left:372px;top:155.75px" width="8" height="5"><path d="M0.5,0.5 H7.5 L4,4.5 Z" fill="#111"/></svg>
<div id="t139" class="t b" style="left:325px;top:154.58px;font-size:7px;color:#08091a;font-family:'Liberation Sans',sans-serif;transform:scaleX(0.8964);">Axial</div>
<div id="t140" class="t b" style="left:392px;top:154.58px;font-size:7px;color:#08091a;font-family:'Liberation Sans',sans-serif;transform:scaleX(0.8752);">Mode</div>
<div class="a" style="left:424px;top:152px;width:61px;height:11.5px;background:#6e7aac;border:1px solid #56619a;border-right-color:#8e98c4;border-bottom-color:#8e98c4;border-radius:3px;"></div>
<div class="a" style="left:473px;top:153px;width:11px;height:9.5px;background:#8c97c6;border:1px solid #b4bcdc;border-right-color:#56619a;border-bottom-color:#56619a;"></div>
<svg style="left:475px;top:155.75px" width="8" height="5"><path d="M0.5,0.5 H7.5 L4,4.5 Z" fill="#111"/></svg>
<div id="t141" class="t b" style="left:428px;top:154.58px;font-size:7px;color:#08091a;font-family:'Liberation Sans',sans-serif;transform:scaleX(1.0052);">2D</div>
<div class="a" style="left:283px;top:166px;width:204px;height:1px;background:#56619a;"></div>
<div class="a" style="left:283px;top:167px;width:204px;height:1px;background:#8a95c4;"></div>
<div class="a" style="left:283.2px;top:171.5px;width:98.5px;height:159px;border:2px solid #1a1e33;border-radius:1px;"></div>
<div class="a" style="left:285.7px;top:167.5px;width:22.5px;height:8px;background:#6a76a6;"></div>
<div id="t142" class="t b" style="left:286.7px;top:168.88px;font-size:7px;color:#08091a;font-family:'Liberation Sans',sans-serif;transform:scaleX(0.8789);">Family</div>
<div class="a" style="left:386.6px;top:171.5px;width:98.3px;height:159px;border:2px solid #1a1e33;border-radius:1px;"></div>
<div class="a" style="left:389.1px;top:167.5px;width:18.6px;height:8px;background:#6a76a6;"></div>
<div id="t143" class="t b" style="left:390.1px;top:168.88px;font-size:7px;color:#08091a;font-family:'Liberation Sans',sans-serif;transform:scaleX(0.8348);">Pulse</div>
<div class="a" style="left:490.5px;top:153px;width:102.5px;height:301.7px;border:2px solid #1a1e33;border-radius:1px;"></div>
<div class="a" style="left:493.0px;top:149px;width:51.4px;height:8px;background:#6a76a6;"></div>
<div id="t144" class="t b" style="left:494.0px;top:150.38px;font-size:7px;color:#08091a;font-family:'Liberation Sans',sans-serif;transform:scaleX(0.9430);">Imaging Option</div>
<div class="a" style="left:283.2px;top:337.3px;width:201.5px;height:117.4px;border:2px solid #1a1e33;border-radius:1px;"></div>
<div class="a" style="left:285.7px;top:333.3px;width:37.8px;height:8px;background:#6a76a6;"></div>
<div id="t145" class="t b" style="left:286.7px;top:334.68px;font-size:7px;color:#08091a;font-family:'Liberation Sans',sans-serif;transform:scaleX(0.9128);">Application</div>
<svg style="left:291.5px;top:184.6px" width="8" height="8"><circle cx="4" cy="4" r="3.5" fill="#cdd2e8" stroke="#b0b8d8" stroke-width="0.5"/><circle cx="3.8" cy="4.2" r="1.9" fill="#111"/></svg>
<div id="t146" class="t b" style="left:302px;top:184.88px;font-size:7px;color:#08091a;font-family:'Liberation Sans',sans-serif;transform:scaleX(0.9011);">Echo Planar Imaging</div>
<svg style="left:291.5px;top:199.04999999999998px" width="8" height="8"><circle cx="4" cy="4" r="3.5" fill="#cdd2e8" stroke="#b0b8d8" stroke-width="0.5"/></svg>
<div id="t147" class="t b" style="left:302px;top:199.33px;font-size:7px;color:#08091a;font-family:'Liberation Sans',sans-serif;transform:scaleX(0.8900);">Fast Spin Echo</div>
<svg style="left:291.5px;top:213.5px" width="8" height="8"><circle cx="4" cy="4" r="3.5" fill="#cdd2e8" stroke="#b0b8d8" stroke-width="0.5"/></svg>
<div id="t148" class="t b" style="left:302px;top:213.78px;font-size:7px;color:#08091a;font-family:'Liberation Sans',sans-serif;transform:scaleX(0.8779);">Gradient Echo</div>
<svg style="left:291.5px;top:227.95px" width="8" height="8"><circle cx="4" cy="4" r="3.5" fill="#cdd2e8" stroke="#b0b8d8" stroke-width="0.5"/></svg>
<div id="t149" class="t b" style="left:302px;top:228.23px;font-size:7px;color:#08091a;font-family:'Liberation Sans',sans-serif;transform:scaleX(0.9317);">MNS</div>
<svg style="left:291.5px;top:242.39999999999998px" width="8" height="8"><circle cx="4" cy="4" r="3.5" fill="#cdd2e8" stroke="#b0b8d8" stroke-width="0.5"/></svg>
<div id="t150" class="t b" style="left:302px;top:242.68px;font-size:7px;color:#08091a;font-family:'Liberation Sans',sans-serif;transform:scaleX(0.8617);">Spin Echo</div>
<svg style="left:291.5px;top:256.85px" width="8" height="8"><circle cx="4" cy="4" r="3.5" fill="#cdd2e8" stroke="#b0b8d8" stroke-width="0.5"/></svg>
<div id="t151" class="t b" style="left:302px;top:257.13px;font-size:7px;color:#08091a;font-family:'Liberation Sans',sans-serif;transform:scaleX(0.9371);">Vascular</div>
<svg style="left:395px;top:184.6px" width="8" height="8"><circle cx="4" cy="4" r="3.5" fill="#cdd2e8" stroke="#b0b8d8" stroke-width="0.5"/><circle cx="3.8" cy="4.2" r="1.9" fill="#111"/></svg>
<div id="t152" class="t b" style="left:405px;top:184.88px;font-size:7px;color:#08091a;font-family:'Liberation Sans',sans-serif;transform:scaleX(0.8437);">DW EPI</div>
<svg style="left:395px;top:199.04999999999998px" width="8" height="8"><circle cx="4" cy="4" r="3.5" fill="#cdd2e8" stroke="#b0b8d8" stroke-width="0.5"/></svg>
<div id="t153" class="t b" style="left:405px;top:199.33px;font-size:7px;color:#08091a;font-family:'Liberation Sans',sans-serif;transform:scaleX(0.7853);">Flair EPI</div>
<svg style="left:395px;top:213.5px" width="8" height="8"><circle cx="4" cy="4" r="3.5" fill="#cdd2e8" stroke="#b0b8d8" stroke-width="0.5"/></svg>
<div id="t154" class="t b" style="left:405px;top:213.78px;font-size:7px;color:#08091a;font-family:'Liberation Sans',sans-serif;transform:scaleX(0.8841);">Gradient Echo EPI</div>
<svg style="left:395px;top:227.95px" width="8" height="8"><circle cx="4" cy="4" r="3.5" fill="#cdd2e8" stroke="#b0b8d8" stroke-width="0.5"/></svg>
<div id="t155" class="t b" style="left:405px;top:228.23px;font-size:7px;color:#08091a;font-family:'Liberation Sans',sans-serif;transform:scaleX(0.8640);">Spin Echo EPI</div>
<div class="a" style="left:499px;top:166.7px;width:6.5px;height:6.5px;background:#cdd2e8;"></div>
<div id="t156" class="t b" style="left:508.2px;top:165.98px;font-size:7px;color:#08091a;font-family:'Liberation Sans',sans-serif;transform:scaleX(0.9029);">None</div>
<div class="a" style="left:499px;top:181.17999999999998px;width:6.5px;height:6.5px;background:#cdd2e8;"></div>
<svg style="left:499px;top:180.17999999999998px" width="8" height="8"><path d="M1,4 L3,6.5 L6.5,1" stroke="#111" stroke-width="1.2" fill="none"/></svg>
<div id="t157" class="t b" style="left:508.2px;top:180.46px;font-size:7px;color:#08091a;font-family:'Liberation Sans',sans-serif;transform:scaleX(0.7882);">ASSET</div>
<div class="a" style="left:499px;top:195.66px;width:6.5px;height:6.5px;background:#cdd2e8;"></div>
<div id="t158" class="t b" style="left:508.2px;top:194.94px;font-size:7px;color:#08091a;font-family:'Liberation Sans',sans-serif;transform:scaleX(0.9445);">Cardiac Gating/Triggering</div>
<div class="a" style="left:499px;top:210.14px;width:6.5px;height:6.5px;border:1px solid #8590c0;border-left-color:#56619a;border-top-color:#56619a;"></div>
<div id="t159" class="t b" style="left:508.2px;top:209.42px;font-size:7px;color:#8c96c4;font-family:'Liberation Sans',sans-serif;text-shadow:0.5px 0.5px 0 #5a6596;transform:scaleX(0.9323);">Flow Compensation</div>
<div class="a" style="left:499px;top:224.62px;width:6.5px;height:6.5px;border:1px solid #8590c0;border-left-color:#56619a;border-top-color:#56619a;"></div>
<div id="t160" class="t b" style="left:508.2px;top:223.90px;font-size:7px;color:#8c96c4;font-family:'Liberation Sans',sans-serif;text-shadow:0.5px 0.5px 0 #5a6596;transform:scaleX(0.9445);">Respiratory Gating/Trig...</div>
<div class="a" style="left:499px;top:239.1px;width:6.5px;height:6.5px;background:#cdd2e8;"></div>
<div id="t161" class="t b" style="left:508.2px;top:238.38px;font-size:7px;color:#08091a;font-family:'Liberation Sans',sans-serif;transform:scaleX(0.9179);">Sequential</div>
<div class="a" style="left:499px;top:253.57999999999998px;width:6.5px;height:6.5px;border:1px solid #8590c0;border-left-color:#56619a;border-top-color:#56619a;"></div>
<div id="t162" class="t b" style="left:508.2px;top:252.86px;font-size:7px;color:#8c96c4;font-family:'Liberation Sans',sans-serif;text-shadow:0.5px 0.5px 0 #5a6596;transform:scaleX(0.8803);">Square Pixel</div>
<svg style="left:291.5px;top:349.8px" width="8" height="8"><circle cx="4" cy="4" r="3.5" fill="#cdd2e8" stroke="#b0b8d8" stroke-width="0.5"/></svg>
<div id="t163" class="t b" style="left:301.6px;top:350.08px;font-size:7px;color:#08091a;font-family:'Liberation Sans',sans-serif;transform:scaleX(0.8641);">BRAVO</div>
<svg style="left:395px;top:349.8px" width="8" height="8"><circle cx="4" cy="4" r="3.5" fill="#cdd2e8" stroke="#b0b8d8" stroke-width="0.5"/></svg>
<div id="t164" class="t b" style="left:405px;top:350.08px;font-size:7px;color:#08091a;font-family:'Liberation Sans',sans-serif;transform:scaleX(0.7880);">BREASE</div>
<svg style="left:291.5px;top:364.2px" width="8" height="8"><circle cx="4" cy="4" r="3.5" fill="#cdd2e8" stroke="#b0b8d8" stroke-width="0.5"/></svg>
<div id="t165" class="t b" style="left:301.6px;top:364.48px;font-size:7px;color:#08091a;font-family:'Liberation Sans',sans-serif;transform:scaleX(0.8821);">COSMIC</div>
<svg style="left:395px;top:364.2px" width="8" height="8"><circle cx="4" cy="4" r="3.5" fill="#cdd2e8" stroke="#b0b8d8" stroke-width="0.5"/></svg>
<div id="t166" class="t b" style="left:405px;top:364.48px;font-size:7px;color:#08091a;font-family:'Liberation Sans',sans-serif;transform:scaleX(0.9604);">LAVA-Flex</div>
<svg style="left:291.5px;top:378.6px" width="8" height="8"><circle cx="4" cy="4" r="3.3" fill="none" stroke="#8a95c4" stroke-width="0.9"/><path d="M1.5,6 A3.3,3.3 0 0 1 2,1.8" stroke="#4a5590" fill="none"/></svg>
<div id="t167" class="t b" style="left:301.6px;top:378.88px;font-size:7px;color:#8c96c4;font-family:'Liberation Sans',sans-serif;text-shadow:0.5px 0.5px 0 #5a6596;transform:scaleX(0.8825);">QuickSTEP</div>
<svg style="left:395px;top:378.6px" width="8" height="8"><circle cx="4" cy="4" r="3.5" fill="#cdd2e8" stroke="#b0b8d8" stroke-width="0.5"/></svg>
<div id="t168" class="t b" style="left:405px;top:378.88px;font-size:7px;color:#08091a;font-family:'Liberation Sans',sans-serif;transform:scaleX(0.9269);">T2MAP</div>
<svg style="left:291.5px;top:393.0px" width="8" height="8"><circle cx="4" cy="4" r="3.5" fill="#cdd2e8" stroke="#b0b8d8" stroke-width="0.5"/></svg>
<div id="t169" class="t b" style="left:301.6px;top:393.28px;font-size:7px;color:#08091a;font-family:'Liberation Sans',sans-serif;transform:scaleX(0.8518);">TRICKS</div>
<svg style="left:395px;top:393.0px" width="8" height="8"><circle cx="4" cy="4" r="3.5" fill="#cdd2e8" stroke="#b0b8d8" stroke-width="0.5"/></svg>
<div id="t170" class="t b" style="left:405px;top:393.28px;font-size:7px;color:#08091a;font-family:'Liberation Sans',sans-serif;transform:scaleX(0.9243);">VIBRANT-Flex</div>
<div id="t171" class="t b" style="left:316px;top:463.18px;font-size:7px;color:#08091a;font-family:'Liberation Sans',sans-serif;transform:scaleX(0.8756);">PSD Name</div>
<div class="a" style="left:352px;top:461px;width:99px;height:11.5px;background:#c6cade;border-radius:2px;"></div>
<div class="a" style="left:566px;top:459.6px;width:27px;height:13.5px;background:#8490c0;border:1px solid #c8cee6;border-right-color:#4a5590;border-bottom-color:#4a5590;"></div>
<div id="t172" class="t b" style="left:569px;top:463.70px;font-size:6.8px;color:#08091a;font-family:'Liberation Sans',sans-serif;transform:scaleX(0.9174);">Accept</div>
<div class="a" style="left:0px;top:561px;width:705px;height:39px;background:#2f3a6d;"></div>
<div id="t173" class="t b" style="left:3px;top:572.62px;font-size:7.5px;color:#d8dcee;font-family:'Liberation Sans',sans-serif;transform:scaleX(1.0105);">10:46 AM</div>
<div id="t174" class="t b" style="left:2px;top:580.62px;font-size:7.5px;color:#d8dcee;font-family:'Liberation Sans',sans-serif;transform:scaleX(1.0202);">August 22</div>
<div id="t175" class="t b" style="left:55px;top:586.74px;font-size:6.5px;color:#d8dcee;font-family:'Liberation Sans',sans-serif;transform:scaleX(0.9220);">41%</div>
<div id="t176" class="t b" style="left:78px;top:582.74px;font-size:6.5px;color:#d8dcee;font-family:'Liberation Sans',sans-serif;transform:scaleX(1.1893);">4843/5/4754</div>
<div id="t177" class="t b" style="left:82px;top:590.64px;font-size:6.5px;color:#d8dcee;font-family:'Liberation Sans',sans-serif;transform:scaleX(1.1388);">2136/2624</div>
<div id="t178" class="t b" style="left:133px;top:587.24px;font-size:6.5px;color:#d8dcee;font-family:'Liberation Sans',sans-serif;transform:scaleX(1.0017);">Sent: 4805 (Sung)</div>
<div class="a" style="left:310px;top:570.6px;width:350px;height:20.4px;background:#c0c6e2;"></div>
<div id="t179" class="t b" style="left:397px;top:576.77px;font-size:8.8px;color:#08091a;font-family:'Liberation Sans',sans-serif;transform:scaleX(0.9789);">*** Reset/Download TPS was successful. ***</div>
<div class="a" style="left:661.8px;top:571.2px;width:13.5px;height:19.6px;background:#8a95c6;border:1px solid #aeb6dc;border-right-color:#4a5590;border-bottom-color:#4a5590;border-radius:2px;"></div>
<svg style="left:664px;top:577px" width="9" height="6"><path d="M0.5,5.5 H8.5 L4.5,0.5 Z" fill="#111"/></svg>
<svg style="left:53px;top:567px" width="18" height="17">
<path d="M1,11 L8,8 L15,10 L8,14 Z" fill="#e0e0e0" stroke="#555" stroke-width="0.5"/>
<path d="M1,11 L8,14 L8,16 L1,13 Z" fill="#999"/>
<rect x="11" y="3" width="4" height="11" fill="#ddd" stroke="#444" stroke-width="0.5"/>
<rect x="11.3" y="8" width="3.4" height="6" fill="#2bd02b"/>
</svg>
<svg style="left:92px;top:565px" width="17" height="16">
<path d="M1,4 L8,1 L15,4 L8,7 Z" fill="#aaa" stroke="#222" stroke-width="0.6"/>
<path d="M1,7 L8,4 L15,7 L8,10 Z" fill="#999" stroke="#222" stroke-width="0.6"/>
<path d="M1,10 L8,7 L15,10 L8,13 Z" fill="#888" stroke="#222" stroke-width="0.6"/>
<path d="M1,13 L8,10 L15,13 L8,16 Z" fill="#777" stroke="#222" stroke-width="0.6"/>
</svg>
<svg style="left:150px;top:567px" width="18" height="17">
<rect x="2" y="1" width="11" height="9" fill="#ccc" stroke="#222" stroke-width="0.7"/>
<rect x="4" y="3" width="7" height="5" fill="#777"/>
<rect x="3" y="10" width="9" height="3" fill="#aaa" stroke="#222" stroke-width="0.5"/>
<path d="M3,15 H16 M13.5,13 L16,15 L13.5,17" stroke="#111" stroke-width="1.2" fill="none"/>
</svg>
<svg style="left:210px;top:567px" width="20" height="17">
<circle cx="9" cy="9" r="7.5" fill="#bbb" stroke="#444" stroke-width="0.7"/>
<circle cx="9" cy="9" r="2" fill="#666"/>
<path d="M10,12 L17,2 L19,3.5 L12,13 Z" fill="#ddd" stroke="#222" stroke-width="0.7"/>
</svg>
<svg style="left:273px;top:567px" width="15" height="17">
<rect x="1" y="1" width="13" height="15" fill="#111"/>
<rect x="4" y="3" width="7" height="3" fill="#ddd"/><rect x="4" y="7" width="7" height="3" fill="#ddd"/><rect x="4" y="11" width="7" height="3" fill="#ddd"/>
</svg>
<svg style="left:690px;top:571px" width="15" height="21">
<rect x="0.5" y="0.8" width="15" height="7.6" rx="1" fill="#050505" stroke="#bbb" stroke-width="0.6"/>
<path d="M2,4.5 H3.5 M5,4.5 H6.5 M8,4.5 H9.5 M11,4.5 H12.5 M2.5,6.5 H13.5" stroke="#ccc" stroke-width="0.8"/>
<rect x="6.8" y="8.4" width="1.6" height="2.6" fill="#ddd" transform="rotate(0 11.1 14.2)"/><rect x="10.3" y="8.6" width="1.6" height="2.6" fill="#ddd" transform="rotate(30 11.1 14.2)"/><rect x="10.3" y="8.6" width="1.6" height="2.6" fill="#ddd" transform="rotate(60 11.1 14.2)"/><rect x="10.3" y="8.6" width="1.6" height="2.6" fill="#ddd" transform="rotate(90 11.1 14.2)"/><rect x="10.3" y="8.6" width="1.6" height="2.6" fill="#ddd" transform="rotate(120 11.1 14.2)"/><rect x="10.3" y="8.6" width="1.6" height="2.6" fill="#ddd" transform="rotate(150 11.1 14.2)"/><rect x="10.3" y="8.6" width="1.6" height="2.6" fill="#ddd" transform="rotate(180 11.1 14.2)"/><rect x="10.3" y="8.6" width="1.6" height="2.6" fill="#ddd" transform="rotate(210 11.1 14.2)"/><rect x="10.3" y="8.6" width="1.6" height="2.6" fill="#ddd" transform="rotate(240 11.1 14.2)"/><rect x="10.3" y="8.6" width="1.6" height="2.6" fill="#ddd" transform="rotate(270 11.1 14.2)"/><rect x="10.3" y="8.6" width="1.6" height="2.6" fill="#ddd" transform="rotate(300 11.1 14.2)"/><rect x="10.3" y="8.6" width="1.6" height="2.6" fill="#ddd" transform="rotate(330 11.1 14.2)"/>
<circle cx="7.6" cy="14.0" r="4.2" fill="#e0e0e0"/>
<circle cx="7.6" cy="14.0" r="1.8" fill="#2f3a6d"/>
</svg>
</body></html>
